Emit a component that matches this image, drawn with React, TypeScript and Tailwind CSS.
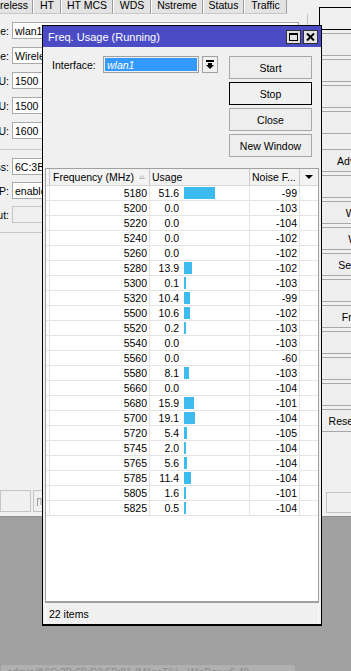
import React from "react";

const rows: [number, number, number][] = [
  [5180, 51.6, -99],
  [5200, 0.0, -103],
  [5220, 0.0, -104],
  [5240, 0.0, -102],
  [5260, 0.0, -102],
  [5280, 13.9, -102],
  [5300, 0.1, -103],
  [5320, 10.4, -99],
  [5500, 10.6, -102],
  [5520, 0.2, -103],
  [5540, 0.0, -103],
  [5560, 0.0, -60],
  [5580, 8.1, -103],
  [5660, 0.0, -104],
  [5680, 15.9, -101],
  [5700, 19.1, -104],
  [5720, 5.4, -105],
  [5745, 2.0, -104],
  [5765, 5.6, -104],
  [5785, 11.4, -104],
  [5805, 1.6, -101],
  [5825, 0.5, -104],
];

const tabs: [string, string][] = [
  ["General", "w-[50px]"],
  ["Wireless", "w-[50px]"],
  ["HT", "w-[28px]"],
  ["HT MCS", "w-[52px]"],
  ["WDS", "w-[38px]"],
  ["Nstreme", "w-[52px]"],
  ["Status", "w-[41px]"],
  ["Traffic", "w-[43px]"],
];

function Field({ label, value, disabled }: { label: string; value: string; disabled?: boolean }) {
  return (
    <div className="flex items-center h-[17px] shrink-0">
      <div className="w-[9px] mr-[3px] flex justify-end overflow-hidden">
        <span className="shrink-0 whitespace-nowrap">{label}</span>
      </div>
      <div
        className={
          "w-[287px] h-[17px] flex items-center pl-[2px] whitespace-nowrap overflow-hidden border " +
          (disabled ? "bg-[#f0f0f0] border-[#c4c4c4]" : "bg-white border-[#a9a9a9]")
        }
      >
        {value}
      </div>
    </div>
  );
}

function SideBtn({ text, def }: { text: string; def?: boolean }) {
  return (
    <div
      className={
        "h-[23px] shrink-0 flex items-center justify-center whitespace-nowrap border " +
        (def ? "border-black bg-[#f0f0f0]" : "border-[#a8a8a8] bg-[#eeeeee]")
      }
    >
      {text}
    </div>
  );
}

function WinBtn({ text, def }: { text: string; def?: boolean }) {
  return (
    <div
      className={
        "w-[83px] h-[23px] flex items-center justify-center whitespace-nowrap border " +
        (def ? "border-black bg-[#f0f0f0]" : "border-[#a8a8a8] bg-[#eeeeee]")
      }
    >
      {text}
    </div>
  );
}

export default function App() {
  return (
    <div className="relative w-[351px] h-[671px] overflow-hidden bg-[#a0a0a0] text-black text-[10.5px] leading-[12px] font-['Liberation_Sans',Arial,sans-serif]">
      {/* background interface window */}
      <div className="flex h-[517px] bg-[#f0f0f0] border-b border-[#8c8c8c]">
        <div className="w-[319px] shrink-0 flex flex-col">
          <div className="w-[287px] h-[14px] flex justify-end overflow-hidden shrink-0">
            {tabs.map(([t, w]) => (
              <div
                key={t}
                className={
                  w +
                  " shrink-0 h-[14px] flex justify-center items-start leading-[11px] whitespace-nowrap bg-[#e3e3e3] border-l border-white border-r border-r-[#9c9c9c] border-b border-b-[#c8c8c8]"
                }
              >
                {t}
              </div>
            ))}
          </div>
          <div className="w-[308px] flex-1 border-r border-[#c2c2c2] flex flex-col pt-[8px]">
            <div className="flex flex-col gap-[8px]">
              <Field label="Name:" value="wlan1" />
              <Field label="Type:" value="Wireless (Atheros AR9888)" />
              <Field label="MTU:" value="1500" />
              <Field label="Actual MTU:" value="1500" />
              <Field label="L2 MTU:" value="1600" />
            </div>
            <div className="mt-[10px] h-px bg-[#c6c6c6]" />
            <div className="mt-[8px] flex flex-col gap-[7px]">
              <Field label="MAC Address:" value="6C:3B:6B:A1:22:0F" />
              <Field label="ARP:" value="enabled" />
              <Field label="ARP Timeout:" value="" disabled />
            </div>
            <div className="mt-[9px] h-px bg-[#c6c6c6]" />
            <div className="flex-1" />
            <div className="flex gap-[2px] items-center mb-[4px]">
              <div className="w-[31px] h-[22px] border border-[#c4c4c4]" />
              <div className="flex-1 h-[22px] border border-[#c4c4c4] flex items-center pl-[3px] text-[#9a9a9a]">
                <svg width="8" height="9" viewBox="0 0 8 9">
                  <path d="M0.5 9 V1.5 H4 V7.5 H7.5 V3" fill="none" stroke="#9a9a9a" strokeWidth="1" />
                </svg>
              </div>
            </div>
          </div>
        </div>
        <div className="w-[112px] shrink-0 flex flex-col pt-[7px]">
          <div className="flex flex-col gap-[3px]">
            <SideBtn text="OK" def />
            <SideBtn text="Cancel" />
            <SideBtn text="Apply" />
            <SideBtn text="Disable" />
            <SideBtn text="Comment" />
          </div>
          <div className="mt-[15px] flex flex-col gap-[3px]">
            <SideBtn text="Advanced Mode" />
            <SideBtn text="Torch" />
            <SideBtn text="WPS Accept" />
            <SideBtn text="WPS Client" />
            <SideBtn text="Setup Repeater" />
            <SideBtn text="Scan..." />
            <SideBtn text="Freq. Usage..." />
            <SideBtn text="Align..." />
            <SideBtn text="Sniff..." />
            <SideBtn text="Snooper..." />
            <SideBtn text="Reset Configuration" />
          </div>
          <div className="flex-1" />
          <div className="ml-[7px] mb-[3px] h-[21px] border border-[#c4c4c4]" />
        </div>
      </div>

      {/* faint taskbar item at the bottom */}
      <div className="mt-[148px] ml-[1px] w-[294px] h-[8px] rounded-t-[3px] bg-[#b0b0b0] overflow-hidden pl-[6px] pt-[2px] whitespace-nowrap text-[#8a8a8a] text-[10px]">
        admin@6C:3B:6B:D3:5B:81 (MikroTik) - WinBox v6.49
      </div>

      {/* Freq. Usage window */}
      <div className="absolute left-[42px] top-[25px] w-[280px] h-[601px] border border-black border-b-2 bg-[#f0f0f0] flex flex-col">
        <div className="h-[21px] shrink-0 bg-[#4b4bc6] flex items-center pl-[5px] pr-[3px] text-white text-[11px]">
          <span className="whitespace-nowrap">Freq. Usage (Running)</span>
          <div className="ml-auto flex gap-[2px]">
            <div className="w-[15px] h-[14px] bg-[#e2e2e2] border border-[#303030] flex items-center justify-center">
              <svg width="9" height="8" viewBox="0 0 9 8">
                <rect x="0.5" y="0.5" width="8" height="7" fill="none" stroke="#000" strokeWidth="1" />
                <rect x="0" y="0" width="9" height="2" fill="#000" />
              </svg>
            </div>
            <div className="w-[15px] h-[14px] bg-[#e2e2e2] border border-[#303030] flex items-center justify-center">
              <svg width="9" height="8" viewBox="0 0 9 8">
                <path d="M1 0.5 L8 7.5 M8 0.5 L1 7.5" stroke="#000" strokeWidth="2" />
              </svg>
            </div>
          </div>
        </div>

        <div className="flex-1 flex flex-col px-[2px]">
          <div className="h-[121px] shrink-0 flex items-start pt-[9px]">
            <div className="w-[58px] pl-[7px] h-[17px] flex items-center whitespace-nowrap">Interface:</div>
            <div className="w-[96px] h-[17px] border border-[#a0a0a0] p-px">
              <div className="h-full bg-[#3399ff] text-white italic flex items-center pl-[2px]">wlan1</div>
            </div>
            <div className="ml-[3px] w-[16px] h-[17px] border border-[#a0a0a0] bg-[#f0f0f0] flex items-center justify-center">
              <svg width="8" height="9" viewBox="0 0 8 9">
                <rect x="0" y="0" width="8" height="2" fill="#000" />
                <rect x="2" y="3" width="4" height="2" fill="#000" />
                <path d="M0 5 H8 L4 9 Z" fill="#000" />
              </svg>
            </div>
            <div className="ml-[11px] flex flex-col gap-[3px]">
              <WinBtn text="Start" />
              <WinBtn text="Stop" def />
              <WinBtn text="Close" />
              <WinBtn text="New Window" />
            </div>
          </div>

          <div className="flex-1 flex flex-col bg-white border-l border-r border-t border-[#a0a0a0] border-b-2 border-b-[#a0a0a0]">
            <div className="h-[17px] shrink-0 flex bg-[#f3f3f3] border-b border-[#d6d6d6]">
              <div className="w-[4px] border-r border-[#c8c8c8]" />
              <div className="w-[100px] border-r border-[#c8c8c8] flex items-center justify-between pl-[3px] pr-[4px] whitespace-nowrap">
                <span>Frequency (MHz)</span>
                <svg width="6" height="4" viewBox="0 0 6 4">
                  <path d="M0.5 3.5 L3 0.5 L5.5 3.5 Z" fill="none" stroke="#b8b8b8" strokeWidth="1" />
                </svg>
              </div>
              <div className="w-[100px] border-r border-[#c8c8c8] flex items-center pl-[2px]">Usage</div>
              <div className="w-[50px] border-r border-[#c8c8c8] flex items-center pl-[2px] whitespace-nowrap overflow-hidden">Noise F...</div>
              <div className="flex-1 flex items-center justify-center">
                <svg width="8" height="4" viewBox="0 0 8 4">
                  <path d="M0 0 H8 L4 4 Z" fill="#000" />
                </svg>
              </div>
            </div>
            {rows.map(([f, u, n]) => {
              const w = u === 0 ? 0 : Math.max(2, Math.round(u * 0.6));
              return (
                <div key={f} className="h-[15px] shrink-0 flex border-b border-[#e4e4e4]">
                  <div className="w-[4px] border-r border-[#e4e4e4]" />
                  <div className="w-[100px] border-r border-[#e4e4e4] flex items-center justify-end pr-[2px]">{f}</div>
                  <div className="w-[100px] border-r border-[#e4e4e4] flex items-center">
                    <div className="w-[29px] text-right">{u.toFixed(1)}</div>
                    {w > 0 && <div className="ml-[5px] h-[12px] bg-[#3dbbee]" style={{ width: w }} />}
                  </div>
                  <div className="w-[50px] border-r border-[#e4e4e4] flex items-center justify-end pr-[2px]">{n}</div>
                  <div className="flex-1" />
                </div>
              );
            })}
          </div>

          <div className="h-[21px] shrink-0 flex items-center pl-[3px] border-l border-r border-[#fafafa]">22 items</div>
        </div>
      </div>
    </div>
  );
}
